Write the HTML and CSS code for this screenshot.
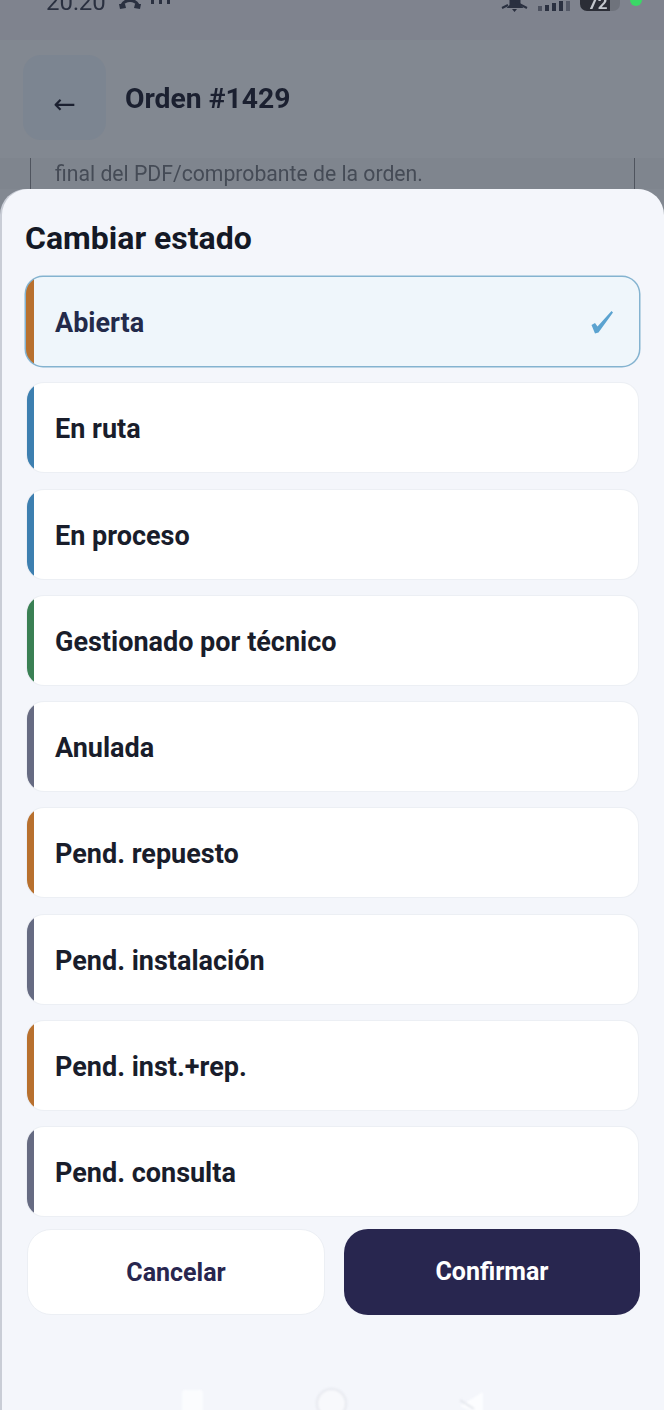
FILE: index.html
```html
<!DOCTYPE html>
<html lang="es">

<head>
    <meta charset="UTF-8">
    <meta name="viewport" content="width=device-width, initial-scale=1.0">
    <title>Orden #1429 | Cambiar estado</title>
    <link rel="stylesheet" href="styles.css">
</head>

<body>
    <main>
        <div class="statusbar">
            <div class="status-left">
                <span class="clock">20:20</span>
                <svg class="call" viewBox="0 0 22 11" width="22" height="11">
                    <path d="M3 7C6 1 16 1 19 7" fill="none" stroke="currentColor" stroke-width="3" />
                    <path d="M0 6l6 0 1 4-6 1zM22 6l-6 0-1 4 6 1z" fill="currentColor" />
                </svg>
                <span class="dots">
                    <span></span>
                    <span></span>
                    <span></span>
                </span>
            </div>
            <div class="status-right">
                <svg class="bell" viewBox="0 0 27 20" width="27" height="20">
                    <path d="M13.5 1c-3 0-5 3-5 6v6l-3 3h17l-3-3V7c0-3-2-6-6-6zM11 17h5l-2.500 3z" fill="currentColor" />
                    <path d="M1 3l25 13M26 3L20 7M1 16l6-3" stroke="currentColor" stroke-width="2" />
                </svg>
                <div class="signal">
                    <span class="bar-1"></span>
                    <span class="bar-2"></span>
                    <span class="bar-3"></span>
                    <span class="bar-4"></span>
                    <span class="bar-5"></span>
                </div>
                <div class="battery"><span>72</span></div>
                <span class="cam-dot"></span>
            </div>
        </div>
        <div class="header">
            <button class="back">←</button>
            <p class="title">Orden #1429</p>
        </div>
        <div class="note">
            <div class="note-box">
                <p>final del PDF/comprobante de la orden.</p>
            </div>
        </div>

        <div class="sheet">
            <h2 class="sheet-title">Cambiar estado</h2>
            <div class="options">
                <div class="option orange selected">
                    <span>Abierta</span>
                    <svg class="check" viewBox="0 0 24 24" width="24" height="24">
                        <path d="M1.500 15L5 13l2.500 3.500L21.500 1l1.500 1.500L8.500 22.500 5 23.500z" fill="currentColor" />
                    </svg>
                </div>
                <div class="option blue"><span>En ruta</span></div>
                <div class="option blue"><span>En proceso</span></div>
                <div class="option green"><span>Gestionado por técnico</span></div>
                <div class="option grey"><span>Anulada</span></div>
                <div class="option orange"><span>Pend. repuesto</span></div>
                <div class="option grey"><span>Pend. instalación</span></div>
                <div class="option orange"><span>Pend. inst.+rep.</span></div>
                <div class="option grey"><span>Pend. consulta</span></div>
            </div>
            <div class="actions">
                <button class="button cancel">Cancelar</button>
                <button class="button confirm">Confirmar</button>
            </div>
            <div class="navbar">
                <span class="nav-square"></span>
                <span class="nav-circle"></span>
                <svg class="nav-back" viewBox="0 0 23 24" width="23" height="24">
                    <path d="M23 0L0 14l23 10z" fill="#fcfdff" />
                    <path d="M0 8l14 9" fill="none" stroke="#e3e6ec" stroke-width="2" />
                </svg>
            </div>
        </div>
    </main>
</body>

</html>
```

FILE: styles.css
```css
:root {
    --text-color: #1b2030;
    --navy: #28264f;
    --sheet-color: #f4f6fb;
    --backdrop-color: #828891;
    --dim-text: #2a3040;
}

html,
body {
    margin: 0;
    height: 100%;
    overflow: hidden;
    font-family: Roboto, "Liberation Sans", sans-serif;
    background-color: var(--backdrop-color);
    color: var(--text-color);
}

main {
    height: 1410px;
    overflow: hidden;
}

.statusbar {
    height: 40px;
    padding: 0 22px 0 46px;
    display: flex;
    justify-content: space-between;
    align-items: flex-start;
    overflow: hidden;
    background-color: #7f838e;
    color: var(--dim-text);
    filter: blur(0.5px);
}

.status-left {
    display: flex;
    gap: 13px;
    margin-top: -12px;
    align-items: center;
}

.clock {
    font-size: 24px;
    line-height: 28px;
}

.call {
    margin-top: 3px;
}

.dots {
    display: flex;
    gap: 5px;
    align-self: flex-start;
    margin: 12px 0 0 -3px;
}

.dots span {
    width: 3px;
    height: 4px;
    background-color: var(--dim-text);
}

.status-right {
    height: 12px;
    display: flex;
    gap: 10px;
    align-items: flex-end;
}

.signal {
    display: flex;
    align-items: flex-end;
    gap: 3px;
    margin-bottom: 1px;
}

.signal span {
    width: 4px;
    background-color: var(--dim-text);
}

.signal .bar-1 { height: 5px; opacity: 0.6; }
.signal .bar-2 { height: 6px; }
.signal .bar-3 { height: 8px; }
.signal .bar-4 { height: 10px; }
.signal .bar-5 { height: 10px; opacity: 0.5; }

.battery {
    width: 40px;
    height: 22px;
    padding-left: 8px;
    box-sizing: border-box;
    margin-bottom: 1px;
    border-radius: 7px;
    background: linear-gradient(90deg, #2b2d36 75%, #6f737c 75%);
    color: #c4c7cd;
    font-size: 17px;
    font-weight: bold;
    line-height: 28px;
}

.cam-dot {
    width: 12px;
    height: 12px;
    margin: 0 0 6px 0;
    border-radius: 50%;
    background-color: #3ad866;
}

.header {
    height: 118px;
    padding: 15px 0 0 23px;
    box-sizing: border-box;
    display: flex;
    align-items: flex-start;
    gap: 19px;
    filter: blur(0.4px);
}

.back {
    width: 83px;
    height: 85px;
    padding: 12px 0 0 0;
    border: none;
    border-radius: 18px;
    background-color: #7c8591;
    color: var(--text-color);
    font-family: "DejaVu Sans", sans-serif;
    font-size: 27px;
    line-height: 1;
}

.header .title {
    margin: 27px 0 0;
    font-size: 28.3px;
    line-height: 34px;
    font-weight: bold;
}

.note {
    height: 31px;
    padding: 0 29px 0 30px;
    background-color: #7f858e;
    overflow: hidden;
    filter: blur(0.4px);
}

.note-box {
    height: 31px;
    padding-left: 24px;
    box-sizing: border-box;
    border-left: 1px solid #4f545e;
    border-right: 1px solid #4f545e;
}

.note p {
    margin: 0;
    color: #454b56;
    font-size: 21.2px;
    line-height: 32px;
}

.sheet {
    height: 1221px;
    margin-left: 2px;
    padding: 29px 26px 0 25px;
    box-sizing: border-box;
    background-color: var(--sheet-color);
    box-shadow: -2px 0 0 #c9cdd6;
    border-radius: 26px 26px 0 0;
    overflow: hidden;
}

.sheet-title {
    margin: 0 0 19px -2px;
    font-size: 32px;
    line-height: 40px;
    font-weight: bold;
    color: #141926;
}

.options {
    display: flex;
    flex-direction: column;
    gap: 17.3px;
}

.option {
    height: 89px;
    padding: 0 25px 0 28px;
    box-sizing: border-box;
    display: flex;
    align-items: center;
    justify-content: space-between;
    background-color: #fff;
    box-shadow: 0 0 0 1px #eceff4;
    border-radius: 17px;
    font-size: 27px;
    font-weight: bold;
    color: #191d2b;
}

.option span {
    margin-top: 3px;
}

.option.orange { background-image: linear-gradient(90deg, #b8702e 7px, transparent 7px); }
.option.blue { background-image: linear-gradient(90deg, #3d7fb0 7px, transparent 7px); }
.option.green { background-image: linear-gradient(90deg, #3a8054 7px, transparent 7px); }
.option.grey { background-image: linear-gradient(90deg, #666b82 7px, transparent 7px); }

.option.selected {
    margin: 0 -1px;
    padding-left: 29px;
    background-color: #eff6fb;
    background-image: linear-gradient(90deg, #b8702e 8px, transparent 8px);
    box-shadow: 0 0 0 1.5px #84b3d0;
    color: #232a4a;
}

.check {
    color: #5ba3d0;
}

.actions {
    margin: 12.6px -2px 0 0;
    display: grid;
    grid-template-columns: 298px 296px;
    justify-content: space-between;
}

.button {
    height: 86px;
    border-radius: 24px;
    font-family: Roboto, "Liberation Sans", sans-serif;
    font-size: 25px;
    font-weight: bold;
}

.cancel {
    padding-top: 3px;
    background-color: #fff;
    border: 1px solid #eceff4;
    color: var(--navy);
}

.confirm {
    background-color: var(--navy);
    border: none;
    color: #fff;
}

.navbar {
    margin-top: 73px;
    display: flex;
    justify-content: center;
    align-items: flex-start;
    gap: 113px;
    filter: blur(1px);
}

.nav-square {
    width: 21px;
    height: 40px;
    margin-top: 2px;
    border-radius: 3px;
    background-color: #fbfcfe;
}

.nav-circle {
    width: 31px;
    height: 31px;
    box-sizing: border-box;
    border: 2px solid #e6e8ee;
    border-radius: 50%;
    background-color: #f8f9fc;
}

.nav-back {
    margin-top: 4px;
}
```
